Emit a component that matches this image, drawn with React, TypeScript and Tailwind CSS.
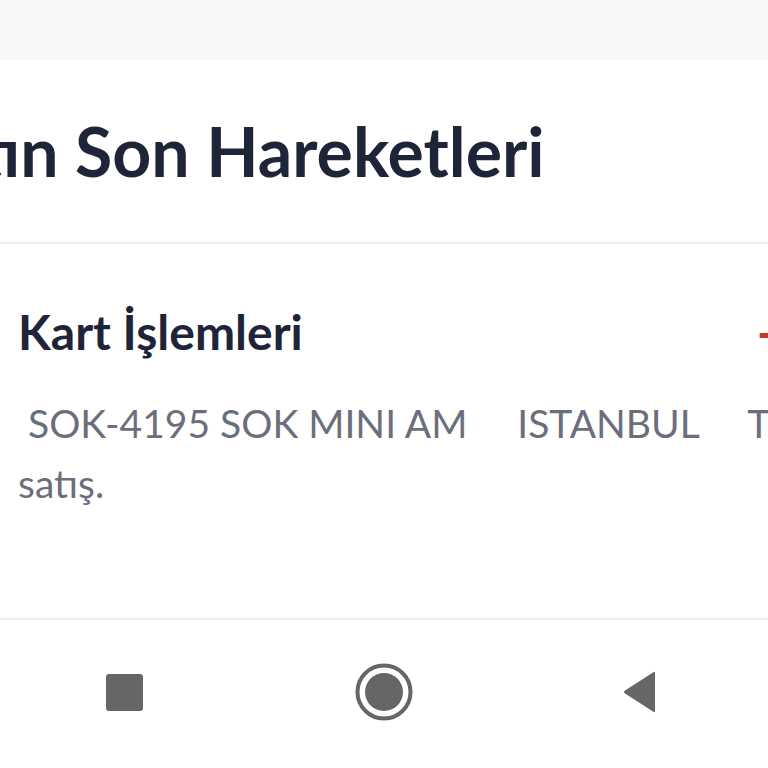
import React from 'react';

const font = { fontFamily: 'Lato, "Noto Sans", sans-serif' };

function NavBar() {
  return (
    <div className="flex h-[150px] items-center justify-around border-t-2 border-[#eeeeee] bg-white pb-[4px]">
      <div className="flex w-[256px] justify-center pr-[7px]">
        <div className="h-[37px] w-[37px] rounded-[3px] bg-[#666666]" />
      </div>
      <div className="flex w-[256px] justify-center">
        <svg width="58" height="58" viewBox="0 0 58 58">
          <circle cx="29" cy="29" r="26.5" fill="none" stroke="#666666" strokeWidth="4" />
          <circle cx="29" cy="29" r="19" fill="#666666" />
        </svg>
      </div>
      <div className="flex w-[256px] justify-center">
        <svg width="38" height="42" viewBox="0 0 38 42">
          <path d="M34 2 L34 40 Q34 42 32 40.5 L4 22.5 Q2 21 4 19.5 L32 1.5 Q34 0 34 2 Z" fill="#666666" />
        </svg>
      </div>
    </div>
  );
}

export default function App() {
  return (
    <div className="flex h-[768px] w-[768px] flex-col overflow-hidden bg-white" style={font}>
      <div className="h-[60px] shrink-0 bg-[#f7f8fa]" />

      <div className="flex h-[182px] shrink-0 items-center overflow-hidden">
        <h1 className="ml-[-130px] whitespace-nowrap text-[68px] font-bold leading-none text-[#1e2538]">
          Kartın Son Hareketleri
        </h1>
      </div>

      <div className="flex-1 overflow-hidden border-t-2 border-[#eeeeee] pl-[18px] pt-[58px]">
        <div className="flex w-[900px] items-center">
          <h2 className="w-[739px] shrink-0 text-[48px] font-bold leading-tight text-[#1e2538]">Kart İşlemleri</h2>
          <span className="whitespace-nowrap text-[48px] font-bold leading-tight text-[#c0392b]">-74,50 TL</span>
        </div>
        <p className="mt-[31px] w-[800px] whitespace-pre-wrap text-[39px] leading-[60px] text-[#6b6f7b]">
          {' SOK-4195 SOK MINI AM     ISTANBUL     TR satış.'}
        </p>
      </div>

      <NavBar />
    </div>
  );
}
